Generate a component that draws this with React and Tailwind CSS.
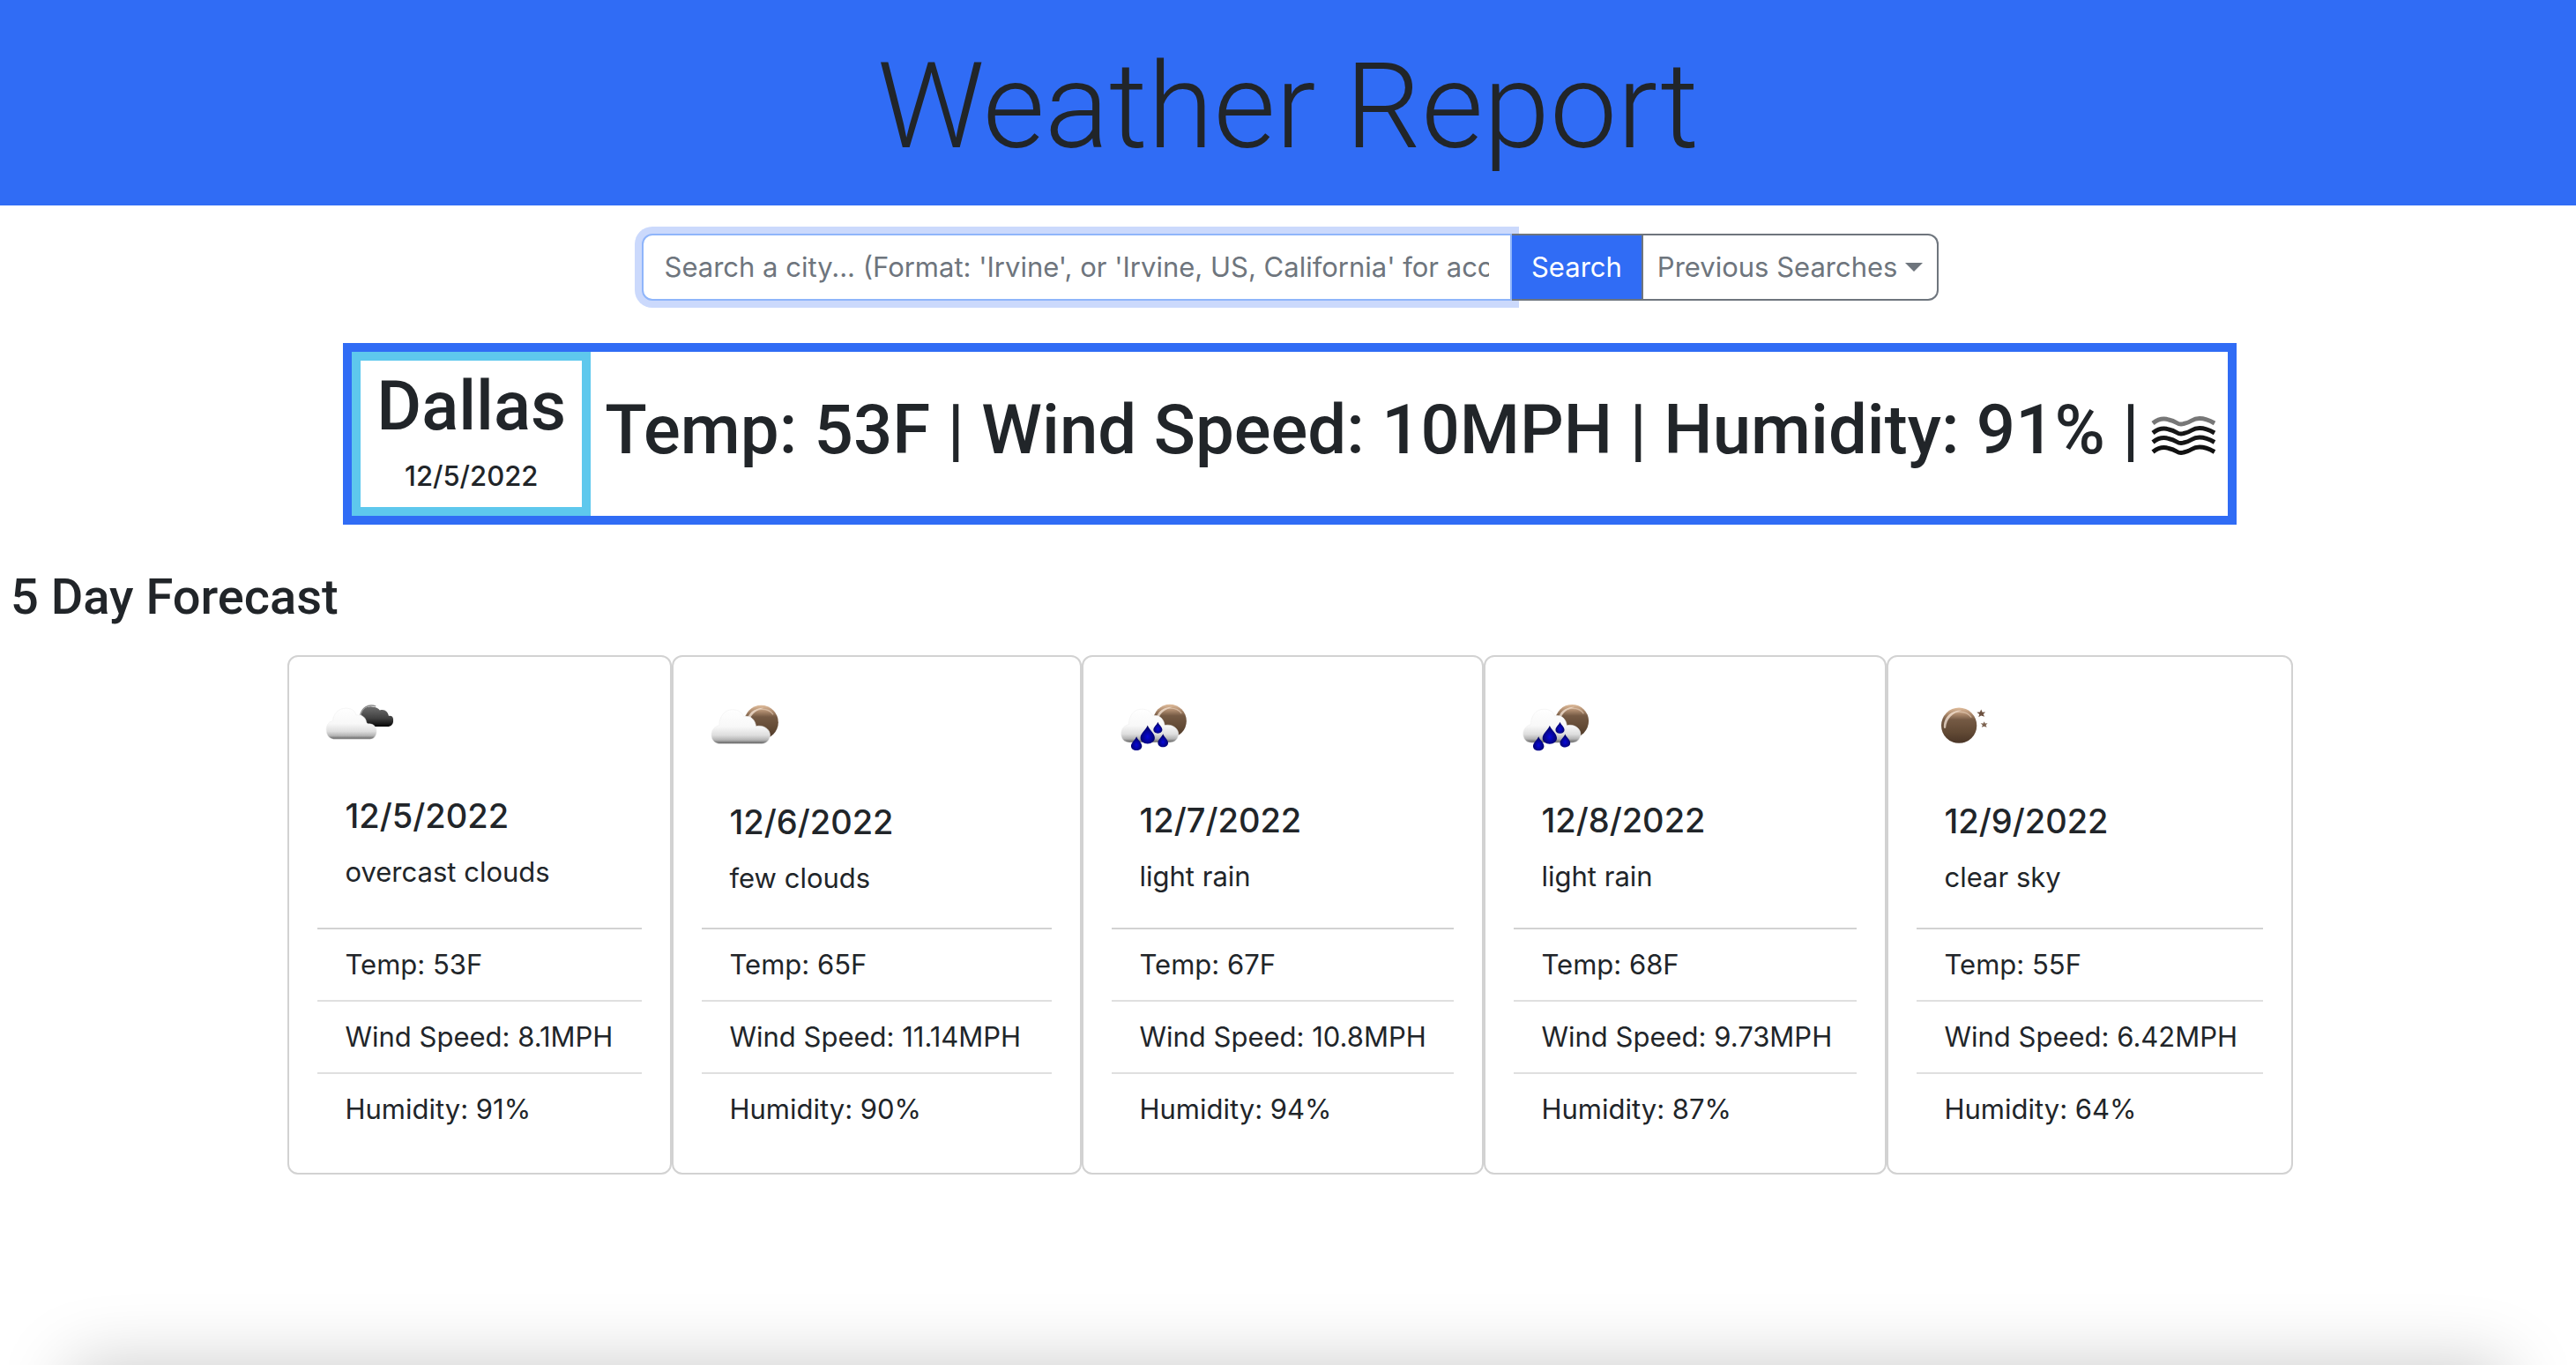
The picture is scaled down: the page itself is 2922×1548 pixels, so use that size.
import React from "react";

const CLOUD =
  "M21 67 C14 67 11 62 11 57 C11 51 15 47 20 46 C20 36 26 28 35 28 C42 28 46 31 48 36 C55 34 61 39 62 47 C70 45 78 50 78 57 C78 63 74 67 68 67 Z";

function Gradients({ id }) {
  return (
    <defs>
      <linearGradient id={`${id}-cloud`} x1="0" y1="0" x2="0" y2="1">
        <stop offset="0" stopColor="#ffffff" />
        <stop offset="0.5" stopColor="#f8f8f8" />
        <stop offset="0.75" stopColor="#dedede" />
        <stop offset="0.89" stopColor="#b4b4b4" />
        <stop offset="1" stopColor="#5c5c5c" />
      </linearGradient>
      <linearGradient id={`${id}-moon`} x1="0" y1="0" x2="0" y2="1">
        <stop offset="0" stopColor="#e0bd9c" />
        <stop offset="0.17" stopColor="#b08d70" />
        <stop offset="0.34" stopColor="#755a44" />
        <stop offset="0.7" stopColor="#614934" />
        <stop offset="1" stopColor="#4a3527" />
      </linearGradient>
      <linearGradient id={`${id}-dark`} x1="0" y1="0" x2="0" y2="1">
        <stop offset="0" stopColor="#6e6e6e" />
        <stop offset="0.6" stopColor="#3f3f3f" />
        <stop offset="1" stopColor="#050505" />
      </linearGradient>
      <radialGradient id={`${id}-drop`} cx="0.5" cy="0.62" r="0.55">
        <stop offset="0" stopColor="#0808d8" />
        <stop offset="1" stopColor="#020262" />
      </radialGradient>
    </defs>
  );
}

function Moon({ id, cx, cy, r }) {
  return (
    <g transform={`translate(${cx} ${cy}) scale(${r / 20})`}>
      <circle r="20" fill={`url(#${id}-moon)`} />
      <path d="M-17 3 C-18 -9 -9 -17 3 -17 C-7 -14 -14 -8 -15 3 Z" fill="#f5e6d8" opacity="0.75" />
      <path d="M-13 -9 C-8 -17 8 -18 14 -9" fill="none" stroke="#e8d0ba" strokeWidth="1.4" opacity="0.6" />
    </g>
  );
}

function Cloud({ id }) {
  return <path d={CLOUD} fill={`url(#${id}-cloud)`} stroke="#efefef" strokeWidth="0.6" />;
}

function Drop({ id, x, top, h }) {
  return (
    <path
      transform={`translate(${x} ${top}) scale(${h / 20})`}
      d="M0 0 C1.5 4.5 8 9 8 14 C8 17.8 4.5 20.5 0 20.5 C-4.5 20.5 -8 17.8 -8 14 C-8 9 -1.5 4.5 0 0 Z"
      fill={`url(#${id}-drop)`}
    />
  );
}

function WeatherIcon({ kind, id }) {
  return (
    <svg viewBox="0 0 100 100" className="aspect-square w-1/4" role="img" aria-label={kind}>
      <Gradients id={id} />
      {kind === "overcast clouds" && (
        <>
          <path
            d="M54 37 C55 29 61 26 67 26.500 C73 27 76 29 77 31 C83 29 87 33 88 38 C93 37 94 41 93.500 45 C93 49 90 51 86 51 L66 51 C60 46 56 42 54 37 Z"
            fill={`url(#${id}-dark)`}
          />
          <path d="M53 37 C55 28 62 23 72 26" fill="none" stroke="#8c8c8c" strokeWidth="1.6" />
          <path
            d="M20 66.500 C14 66 11 61 11 55 C11 48 15 45 19 44 C20 35 26 28.500 35 28.500 C42 28.500 46 31 48 37 C56 36 60 40 61 48 C67 46.500 73 50 73 57 C73 63 69 66.500 65 66.500 Z"
            fill={`url(#${id}-cloud)`}
            stroke="#efefef"
            strokeWidth="0.6"
          />
        </>
      )}
      {kind === "few clouds" && (
        <>
          <Moon id={id} cx={68} cy={42.5} r={19.5} />
          <Cloud id={id} />
        </>
      )}
      {kind === "light rain" && (
        <>
          <Moon id={id} cx={68} cy={42} r={19.5} />
          <Cloud id={id} />
          <Drop id={id} x={29} top={60} h={16} />
          <Drop id={id} x={42} top={47} h={21} />
          <Drop id={id} x={54} top={43} h={13} />
          <Drop id={id} x={60} top={57} h={15} />
        </>
      )}
      {kind === "clear sky" && (
        <>
          <Moon id={id} cx={49} cy={46.500} r={20.500} />
          <path d="M74.500 28 L76 31.200 L79.500 31 L77 33.500 L78.500 36.500 L74.500 35 L71.500 37 L72.500 33.500 L69.500 31.200 L73.200 31 Z" fill="#6d5140" />
          <path d="M78 42 L79.200 44.200 L82 44 L80 46 L81 48.500 L78 47.500 L75.200 48.500 L76.200 46 L74 44 L77 44.200 Z" fill="#7d6350" />
        </>
      )}
    </svg>
  );
}

function MistIcon() {
  const wave = "q9 -7 18 -4 q5 1 9 3.500 q4 2.500 8 1 q5 -1 9 -3.500 q10 -6 26 3";
  return (
    <svg viewBox="0 0 100 100" className="inline-block h-[100px] w-[100px] align-middle" role="img" aria-label="mist">
      <g fill="none" strokeWidth="5" strokeLinecap="butt">
        <path d={`M15 36 ${wave}`} stroke="#777777" />
        <path d={`M15 47 ${wave}`} stroke="#161616" />
        <path d={`M15 57.500 ${wave}`} stroke="#161616" />
        <path d={`M15 68.500 ${wave}`} stroke="#111111" />
      </g>
    </svg>
  );
}

const DAYS = [
  { date: "12/5/2022", sky: "overcast clouds", temp: "53F", wind: "8.1MPH", humidity: "91%" },
  { date: "12/6/2022", sky: "few clouds", temp: "65F", wind: "11.14MPH", humidity: "90%" },
  { date: "12/7/2022", sky: "light rain", temp: "67F", wind: "10.8MPH", humidity: "94%" },
  { date: "12/8/2022", sky: "light rain", temp: "68F", wind: "9.73MPH", humidity: "87%" },
  { date: "12/9/2022", sky: "clear sky", temp: "55F", wind: "6.42MPH", humidity: "64%" },
];

function DayCard({ day, id }) {
  return (
    <article className="flex flex-col rounded-[12px] border-2 border-[#d2d2d2] p-8">
      <WeatherIcon kind={day.sky} id={id} />
      <div className="flex-1 p-8">
        <h3 className="mb-4 text-[38px] leading-[48px] font-medium">{day.date}</h3>
        <p>{day.sky}</p>
      </div>
      <ul className="border-t-2 border-[#d2d2d2] whitespace-nowrap">
        <li className="border-b-2 border-[#dfdfdf] py-4 pr-6 pl-8">Temp: {day.temp}</li>
        <li className="border-b-2 border-[#dfdfdf] py-4 pr-6 pl-8">Wind Speed: {day.wind}</li>
        <li className="py-4 pr-6 pl-8">Humidity: {day.humidity}</li>
      </ul>
    </article>
  );
}

export default function App() {
  return (
    <div className="flex min-h-screen flex-col overflow-hidden bg-white font-['Inter','Liberation_Sans',sans-serif] text-[31px] leading-[48px] text-[#212529]">
      <header className="bg-[#306cf5] pt-[34px] pb-[26px] text-center">
        <h1 className="font-['Roboto','Liberation_Sans',sans-serif] text-[136px] leading-[173px] font-light">
          Weather Report
        </h1>
      </header>

      <main className="pt-8 pl-1">
        <form className="mx-auto flex h-[76px] w-full max-w-[1471px]" onSubmit={(e) => e.preventDefault()}>
          <input
            type="text"
            aria-label="City"
            placeholder="Search a city... (Format: 'Irvine', or 'Irvine, US, California' for accurate results)"
            className="min-w-0 flex-1 rounded-l-[12px] border-2 border-[#8fb5fa] bg-white px-6 text-[#212529] ring-8 ring-[#cbd9fc] outline-none placeholder:text-[#6e757d] placeholder:opacity-100"
          />
          <button type="submit" className="relative border-y-2 border-r-2 border-[#6e757d] bg-[#306cf5] px-[22px] text-white">
            Search
          </button>
          <button
            type="button"
            aria-haspopup="menu"
            className="relative flex items-center gap-2 rounded-r-[12px] border-2 border-l-0 border-[#6e757d] bg-white px-4 text-[#6e757d]"
          >
            Previous Searches
            <svg viewBox="0 0 20 10" className="h-[10px] w-5" aria-hidden="true">
              <path d="M0 0 H20 L10 10 Z" fill="currentColor" />
            </svg>
          </button>
        </form>

        <section className="mx-auto mt-12 flex w-fit items-center border-10 border-[#306cf5] font-medium">
          <div className="border-10 border-[#5ec8ed] px-[18px] pt-1 pb-4 text-center">
            <h2 className="font-['Roboto','Liberation_Sans',sans-serif] text-[78px] leading-[96px]">Dallas</h2>
            <p className="mt-3 leading-[38px]">12/5/2022</p>
          </div>
          <p className="pl-4 font-['Roboto','Liberation_Sans',sans-serif] text-[78px] leading-[96px] whitespace-nowrap">
            Temp: 53F | Wind Speed: 10MPH | Humidity: 91% |<MistIcon />
          </p>
        </section>

        <h2 className="mt-12 mb-8 px-2 font-['Roboto','Liberation_Sans',sans-serif] text-[56px] leading-[68px] font-medium">
          5 Day Forecast
        </h2>

        <section className="mx-auto grid w-full max-w-[2275px] grid-cols-[436fr_465fr_456fr_457fr_461fr]">
          {DAYS.map((day, i) => (
            <DayCard key={day.date} day={day} id={`day${i}`} />
          ))}
        </section>
      </main>

      <div className="mx-20 mt-auto -mb-40 h-40 shadow-[0_0_80px_rgba(0,0,0,0.21)]" aria-hidden="true" />
    </div>
  );
}
